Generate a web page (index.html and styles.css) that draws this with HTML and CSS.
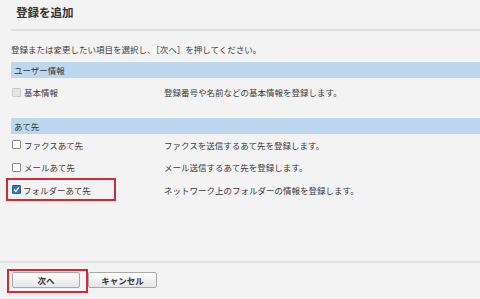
FILE: index.html
```html
<!DOCTYPE html>
<html lang="ja">
<head>
  <meta charset="UTF-8" />
  <title>登録を追加</title>
  <link rel="stylesheet" href="styles.css">
</head>
<body>
  <div class="page">
    <div class="head">
      <h1>登録を追加</h1>
    </div>

    <p class="intro">登録または変更したい項目を選択し、［次へ］を押してください。</p>

    <div class="bar">ユーザー情報</div>
    <div class="row first">
      <span class="item"><span class="box disabled"></span>基本情報</span>
      <span class="desc">登録番号や名前などの基本情報を登録します。</span>
    </div>

    <div class="bar second">あて先</div>
    <div class="row">
      <span class="item"><span class="box"></span>ファクスあて先</span>
      <span class="desc">ファクスを送信するあて先を登録します。</span>
    </div>
    <div class="row">
      <span class="item"><span class="box"></span>メールあて先</span>
      <span class="desc">メール送信するあて先を登録します。</span>
    </div>
    <div class="row">
      <span class="item marked"><span class="box checked">
        <svg width="7" height="7" viewBox="0 0 7 7"><path d="M1 3.6 L2.8 5.4 L6 1.4" fill="none" stroke="#fff" stroke-width="1.4"/></svg>
      </span>フォルダーあて先</span>
      <span class="desc">ネットワーク上のフォルダーの情報を登録します。</span>
    </div>

    <div class="foot">
      <span class="mark"><button class="btn">次へ</button></span>
      <button class="btn">キャンセル</button>
    </div>
  </div>
</body>
</html>
```

FILE: styles.css
```css
body {
  margin: 0;
  background: #f3f3f3;
  font-family: "Noto Sans CJK JP", "Liberation Sans", sans-serif;
  color: #3a3a3a;
  font-size: 8.5px;
}
.page {
  display: flex;
  flex-direction: column;
  height: 299px;
}
.head {
  margin-left: 11px;
  height: 29px;
  border-bottom: 2px solid #dedede;
}
.head h1 {
  margin: 0;
  padding: 5px 0 0 5px;
  font-size: 11.5px;
  line-height: 14px;
  font-weight: bold;
  color: #333;
}
.intro {
  margin: 12px 0 0 11px;
  line-height: 12px;
}
.bar {
  margin: 7px 0 0 11px;
  height: 16px;
  line-height: 16px;
  padding-left: 3px;
  background: #bdd7ee;
  color: #333;
}
.bar.second {
  margin-top: 14px;
}
.row {
  display: flex;
  align-items: center;
  margin-left: 11px;
  height: 22.5px;
}
.row.first {
  margin-top: 3px;
}
.item {
  display: flex;
  align-items: center;
  gap: 3px;
  width: 152px;
  padding-left: 1px;
}
.item.marked {
  margin-left: -5px;
  padding-left: 4px;
  width: 102px;
  margin-right: 48px;
  height: 19px;
  border: 2px solid #d02b35;
  gap: 2px;
}
.box {
  display: inline-flex;
  align-items: center;
  justify-content: center;
  width: 7px;
  height: 7px;
  border: 1px solid #8a8a8a;
  background: #fff;
  border-radius: 1px;
}
.box.disabled {
  border-color: #c8c8c8;
  background: #e4e4e4;
}
.box.checked {
  border-color: #2f5d9e;
  background: #2f72d6;
}
.foot {
  margin-top: auto;
  height: 38px;
  border-top: 2px solid #e2e2e2;
  display: flex;
  align-items: flex-start;
  padding-top: 6px;
  box-sizing: border-box;
}
.mark {
  margin-left: 7px;
  border: 2px solid #d02b35;
  padding: 1px 6px 3px 3px;
  display: flex;
}
.btn {
  width: 68px;
  height: 16px;
  padding: 0;
  font-family: inherit;
  font-size: 8.5px;
  font-weight: bold;
  color: #333;
  border: 1px solid #a9a9a9;
  border-radius: 2px;
  background: linear-gradient(#ffffff, #e6e6e6);
}
.foot > .btn {
  margin-top: 3px;
  width: 69px;
}
```
